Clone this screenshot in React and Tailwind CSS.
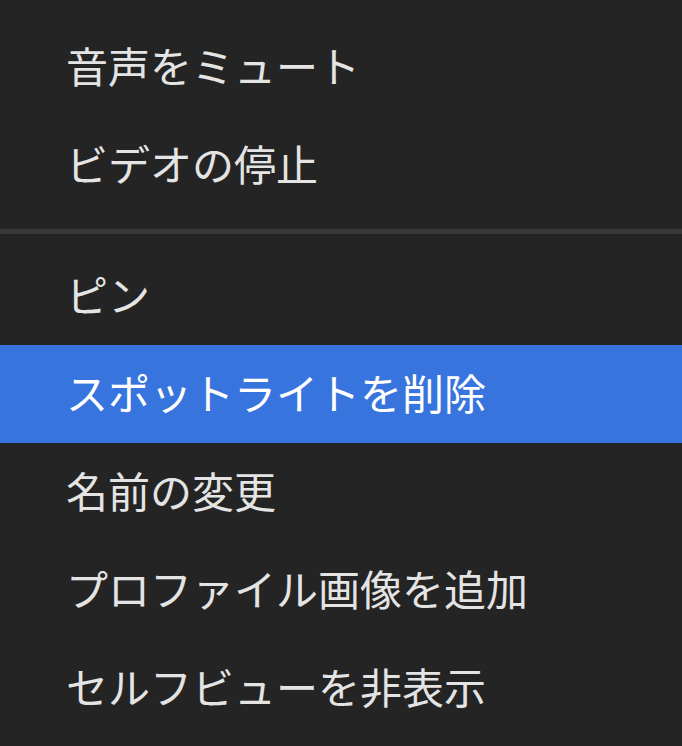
import React from "react";

const groups = [
  ["音声をミュート", "ビデオの停止"],
  ["ピン", "スポットライトを削除", "名前の変更", "プロファイル画像を追加", "セルフビューを非表示"],
];

const active = "スポットライトを削除";

const MenuItem = ({ label }) => {
  const isActive = label === active;
  return (
    <div
      className={`flex items-center h-[98px] pl-[66px] pb-[4px] text-[42px] leading-none ${
        isActive ? "bg-[#3874de] text-white" : "text-[#e4e4e4]"
      }`}
    >
      {label}
    </div>
  );
};

export default function App() {
  return (
    <div
      className="w-[682px] h-[746px] overflow-hidden bg-[#242424] pt-[18px]"
      style={{ fontFamily: '"Noto Sans CJK JP", "Noto Sans", sans-serif' }}
    >
      {groups[0].map((l) => (
        <MenuItem key={l} label={l} />
      ))}
      <div className="pt-[15px] pb-[13px]">
        <div className="h-[5px] bg-[#393939]" />
      </div>
      {groups[1].map((l) => (
        <MenuItem key={l} label={l} />
      ))}
    </div>
  );
}
